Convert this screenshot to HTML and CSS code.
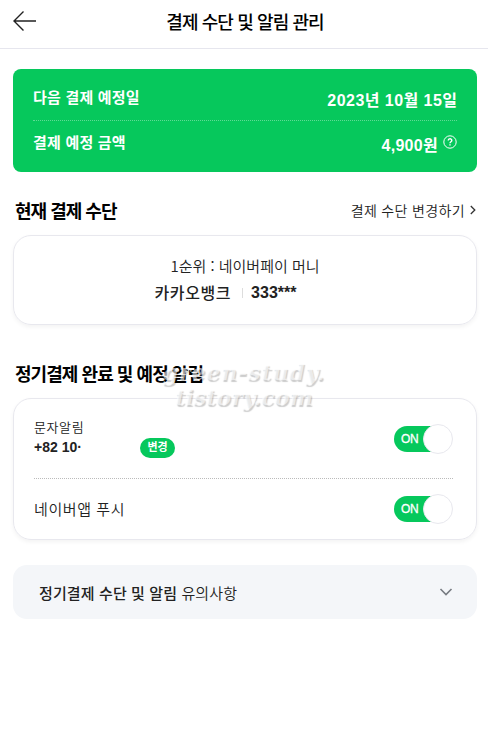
FILE: index.html
```html
<!DOCTYPE html>
<html lang="ko">
<head>
    <meta charset="UTF-8">
    <meta name="viewport" content="width=device-width, initial-scale=1.0">
    <title>결제 수단 및 알림 관리</title>
    <link rel="stylesheet" href="styles.css">
</head>
<body>
    <header class="header">
        <a href="#" class="back" aria-label="뒤로">
            <svg width="24" height="22" viewBox="0 0 24 22" fill="none" stroke="#222" stroke-width="1.4"><path d="M11.5 1.5 2 11 11.5 20.5M2 11H24"/></svg>
        </a>
        <h1 class="header-title">결제 수단 및 알림 관리</h1>
    </header>
    <main class="container">
        <dl class="bill">
            <div class="bill-row">
                <dt><span class="bill-date-label">다음 결제 예정일</span></dt>
                <dd><span class="bill-date">2023년 10월 15일</span></dd>
            </div>
            <div class="bill-row">
                <dt><span class="bill-price-label">결제 예정 금액</span></dt>
                <dd>
                    <span class="bill-price">4,900원</span>
                    <svg class="help" width="14" height="14" viewBox="0 0 14 14" fill="none" stroke="#fff"><circle cx="7" cy="7" r="6.2" stroke-width="1"/><path d="M5.2 5.6C5.2 3.2 8.8 3.2 8.8 5.5 8.8 6.8 7 6.8 7 8.3M7 9.3V10.5" stroke-width="1.4"/></svg>
                </dd>
            </div>
        </dl>

        <section class="method">
            <div class="section-head">
                <h2 class="method-title">현재 결제 수단</h2>
                <a href="#" class="change-link"><span>결제 수단 변경하기</span>
                    <svg width="6" height="10" viewBox="0 0 6 10" fill="none" stroke="#333" stroke-width="1.3"><path d="M.8 1 4.8 5 .8 9"/></svg>
                </a>
            </div>
            <div class="card pay-card">
                <p class="pay-order">1순위 : 네이버페이 머니</p>
                <p class="pay-bank"><span class="bank-name">카카오뱅크</span><i class="bar"></i><span class="bank-no">333***</span></p>
            </div>
        </section>

        <section class="alarm">
            <div class="section-head">
                <h2 class="alarm-title">정기결제 완료 및 예정 알림</h2>
                <div class="watermark"><span class="mark-top">green-study.</span><span class="mark-bottom">tistory.com</span></div>
            </div>
            <div class="card alarm-card">
                <div class="alarm-row sms">
                    <div class="sms-info">
                        <span class="sms-label">문자알림</span>
                        <div class="phone"><strong>+82 10·</strong><button class="btn-change">변경</button></div>
                    </div>
                    <button class="switch"><span>ON</span><i class="knob"></i></button>
                </div>
                <div class="alarm-row push">
                    <span class="push-label">네이버앱 푸시</span>
                    <button class="switch"><span>ON</span><i class="knob"></i></button>
                </div>
            </div>
        </section>

        <a href="#" class="notice">
            <span class="notice-text"><strong>정기결제 수단 및 알림</strong> 유의사항</span>
            <svg width="14" height="8" viewBox="0 0 14 8" fill="none" stroke="#777b82" stroke-width="1.6"><path d="M1.5 1 7 6.5 12.5 1"/></svg>
        </a>
    </main>
</body>
</html>
```
FILE: styles.css
```css
* {
    box-sizing: border-box;
    margin: 0;
    padding: 0;
}
body {
    font-family: "Liberation Sans", "Noto Sans CJK KR", sans-serif;
    background: #fff;
    color: #222;
}
a {
    color: inherit;
    text-decoration: none;
}
svg {
    display: block;
    flex: none;
}
button {
    border: none;
    font-family: inherit;
}
span, h1, h2, p, strong {
    white-space: nowrap;
}
.header {
    display: grid;
    grid-template-columns: 24px 1fr 22px;
    align-items: center;
    height: 49px;
    padding: 0 12px 7px;
    border-bottom: 1px solid #e6e6ee;
}
.header-title {
    font-family: "Noto Sans CJK KR", sans-serif;
    font-size: 18px;
    font-weight: 500;
    line-height: 26px;
    letter-spacing: -0.9px;
    text-align: center;
    color: #000;
}
.container {
    padding: 20px 11px 0 13px;
}
.bill {
    height: 103px;
    padding: 7px 20px;
    border-radius: 8px;
    background: #06c85c;
    color: #fff;
    font-weight: bold;
}
.bill-row {
    display: flex;
    justify-content: space-between;
    height: 45px;
    line-height: 24px;
    padding-top: 10px;
}
.bill-row:first-child {
    border-bottom: 1px dotted #5fda94;
}
.bill-row dt {
    font-family: "Noto Sans CJK KR", sans-serif;
    font-size: 15px;
    letter-spacing: 0.2px;
    margin-top: -1px;
}
.bill-row dd {
    display: flex;
    font-size: 16px;
    padding-top: 3px;
}
.bill-date {
    letter-spacing: 0.45px;
    margin-right: -0.45px;
}
.bill-price {
    letter-spacing: 0.3px;
}
.help {
    margin: 1px 0 0 5px;
}
.section-head {
    display: flex;
    justify-content: space-between;
    align-items: center;
    height: 28px;
    padding: 0 1px 0 2px;
}
.section-head h2 {
    font-family: "Noto Sans CJK KR", sans-serif;
    font-size: 18px;
    font-weight: 700;
    line-height: 28px;
    letter-spacing: -1px;
    margin-top: -2px;
    color: #000;
}
.section-head .alarm-title {
    letter-spacing: -0.95px;
}
.method {
    margin-top: 25px;
}
.change-link {
    display: flex;
    align-items: center;
    gap: 5px;
    margin-top: -2px;
    font-size: 14px;
    font-weight: 350;
    letter-spacing: 0.35px;
    color: #222;
}
.card {
    border: 1px solid #e8e8ee;
    border-radius: 18px;
    box-shadow: 0 2px 4px rgba(0, 0, 0, 0.05);
}
.pay-card {
    height: 90px;
    margin-top: 10px;
    padding-top: 16px;
    text-align: center;
}
.pay-order {
    font-family: "Noto Sans CJK KR", sans-serif;
    font-size: 15px;
    font-weight: 350;
    line-height: 27px;
}
.pay-bank {
    display: flex;
    justify-content: center;
    align-items: center;
    height: 27px;
    padding-right: 39px;
    font-size: 16px;
}
.bank-name {
    font-weight: 500;
    letter-spacing: 0.6px;
    margin-top: -2px;
}
.bar {
    width: 1px;
    height: 10px;
    margin: 0 8px 0 11px;
    background: #ddd;
}
.bank-no {
    font-weight: bold;
}
.alarm {
    margin-top: 35px;
}
.alarm .section-head {
    position: relative;
}
.watermark {
    position: absolute;
    left: 149px;
    top: 0;
    width: 164px;
    display: flex;
    flex-direction: column;
    align-items: center;
    font: italic bold 22px/25px "DejaVu Serif", serif;
    color: rgba(255, 255, 255, 0.6);
    text-shadow: 1px 2px 1px rgba(0, 0, 0, 0.2);
}
.mark-top {
    letter-spacing: 0.9px;
}
.mark-bottom {
    letter-spacing: 0.1px;
}
.alarm-card {
    height: 142px;
    margin-top: 10px;
    padding: 0 23px 0 20px;
}
.alarm-row {
    display: flex;
    justify-content: space-between;
    align-items: center;
}
.sms {
    height: 80px;
    border-bottom: 1px dotted #bbb;
}
.sms-label {
    display: block;
    font-size: 13px;
    font-weight: 350;
    line-height: 18px;
    letter-spacing: 0.6px;
}
.phone {
    display: flex;
    justify-content: space-between;
    width: 141px;
    height: 22px;
    font-size: 14px;
    line-height: 20px;
}
.btn-change {
    width: 35px;
    height: 20px;
    margin-top: 1px;
    border-radius: 10px;
    background: #06c85c;
    color: #fff;
    font-size: 11px;
    font-weight: bold;
    line-height: 19px;
}
.push {
    height: 60px;
}
.push-label {
    font-size: 15px;
    font-weight: 350;
    letter-spacing: 0.6px;
    margin-top: -2px;
}
.switch {
    display: flex;
    align-items: center;
    justify-content: space-between;
    width: 59px;
    height: 26px;
    padding-left: 7px;
    border-radius: 13px;
    background: linear-gradient(to right, #06c85c 45px, #fff 45px);
    color: #fff;
    font-size: 12px;
}
.switch span {
    letter-spacing: -0.4px;
    -webkit-text-stroke: 0.3px #fff;
}
.knob {
    flex: none;
    width: 30px;
    height: 30px;
    border: 1px solid #e8e8ee;
    border-radius: 50%;
    background: #fff;
}
.notice {
    display: flex;
    justify-content: space-between;
    align-items: center;
    height: 54px;
    margin-top: 25px;
    padding: 0 24px 0 26px;
    border-radius: 14px;
    background: #f4f6f9;
    font-size: 15px;
    font-weight: 350;
    letter-spacing: 0.12px;
}
.notice strong {
    font-weight: 500;
}
```
